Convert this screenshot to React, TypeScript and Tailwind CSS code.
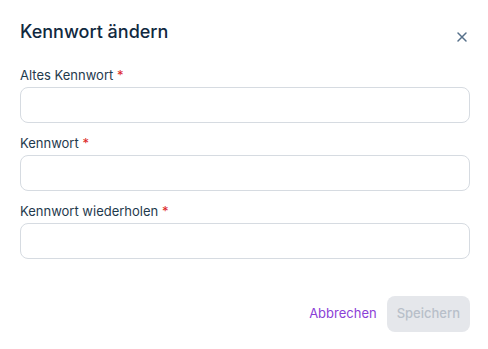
import React from 'react';

function Field({ label }: { label: string }) {
  return (
    <div className="flex flex-col gap-0.5">
      <label className="text-[13px] leading-5 text-[#1f3a4d]">
        {label} <span className="text-[#dc2626]">*</span>
      </label>
      <input
        type="password"
        className="h-9 w-full rounded-lg border border-[#d6dbe1] bg-white px-3 text-sm outline-none"
      />
    </div>
  );
}

export default function App() {
  return (
    <div className="min-h-screen bg-white font-['Inter',sans-serif]">
      <div className="pl-5 pr-[18px] pt-[18px] pb-[18px]">
        <div className="flex items-start justify-between">
          <h2 className="text-lg leading-7 font-medium text-[#11293f]">Kennwort ändern</h2>
          <button className="mt-[13px] mr-[2px] text-[#56708a]">
            <svg width="12" height="12" viewBox="0 0 12 12" fill="none" stroke="currentColor" strokeWidth="1.5" strokeLinecap="round">
              <path d="M2 2l8 8M10 2l-8 8" />
            </svg>
          </button>
        </div>
        <div className="mt-[19px] flex flex-col gap-2.5">
          <Field label="Altes Kennwort" />
          <Field label="Kennwort" />
          <Field label="Kennwort wiederholen" />
        </div>
        <div className="mt-[37px] flex items-center justify-end gap-2.5">
          <button className="text-[13px] text-[#8b3fd6]">Abbrechen</button>
          <button className="h-9 rounded-lg bg-[#e5e7eb] px-2.5 text-[13px] font-medium text-[#b8bfc9]" disabled>
            Speichern
          </button>
        </div>
      </div>
    </div>
  );
}
